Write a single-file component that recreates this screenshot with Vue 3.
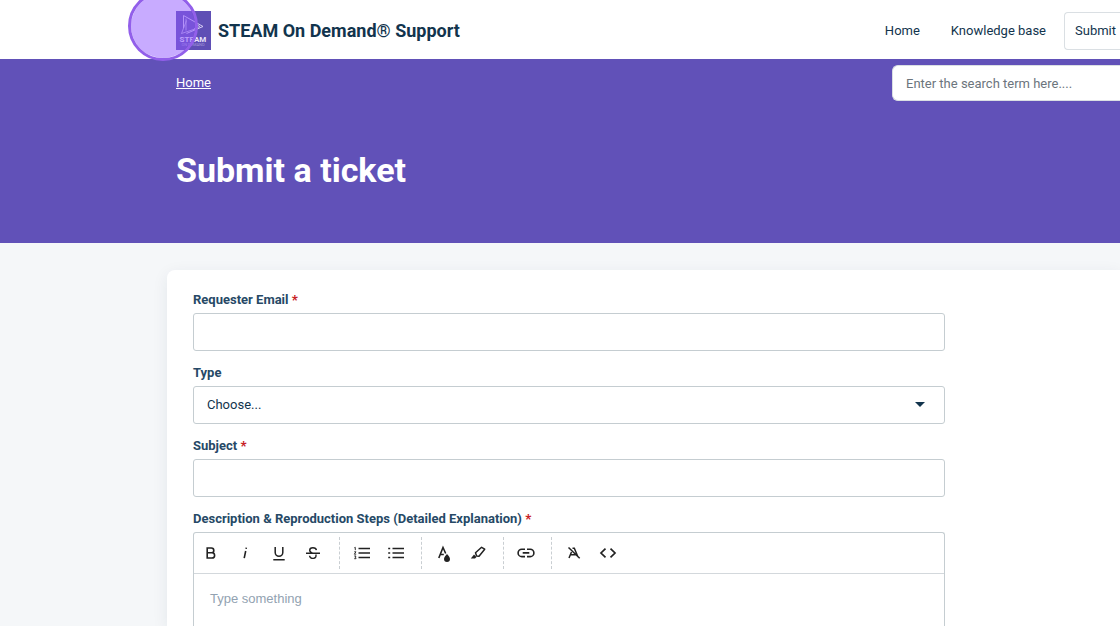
<script setup>
import { ref } from 'vue'

const email = ref('')
const type = ref('')
const subject = ref('')
const description = ref('')
const search = ref('')
</script>

<template>
  <div class="page">
    <header class="topbar">
      <a class="brand" href="#">
        <svg class="logo" viewBox="0 0 35 39" aria-hidden="true">
          <rect width="35" height="39" fill="#5f4fb5" />
          <g fill="none" stroke="#d6cdf3" stroke-width="1" stroke-linejoin="round">
            <path d="M7.500 17V4.500L27 15.500L10.500 22.500" />
            <path d="M10.500 9.500L5.500 22.500L19 18M10 7.500V19.500M19.500 13L24 15.500L18 18" stroke-opacity=".75" />
          </g>
          <text x="17" y="31" class="logo-name">STEAM</text>
          <text x="17" y="35" class="logo-sub">ON DEMAND</text>
        </svg>
        <span class="brand-name">STEAM On Demand® Support</span>
      </a>
      <nav class="nav">
        <a href="#">Home</a>
        <a href="#">Knowledge base</a>
        <button type="button" class="submit">Submit</button>
      </nav>
      <span class="halo"></span>
    </header>

    <section class="hero">
      <div class="hero-row">
        <a class="crumb" href="#">Home</a>
        <input v-model="search" class="search" type="search" aria-label="Search" placeholder="Enter the search term here...." />
      </div>
      <h1>Submit a ticket</h1>
    </section>

    <main class="card">
      <form class="form" @submit.prevent>
        <div class="field">
          <label for="email">Requester Email <b>*</b></label>
          <input id="email" v-model="email" class="control" type="email" />
        </div>
        <div class="field">
          <label for="type">Type</label>
          <div class="select-wrap">
            <select id="type" v-model="type" class="control">
              <option value="">Choose...</option>
            </select>
            <svg class="caret" viewBox="0 0 10 5" aria-hidden="true"><path d="M0 0H10L5 5Z" fill="#12344d" /></svg>
          </div>
        </div>
        <div class="field">
          <label for="subject">Subject <b>*</b></label>
          <input id="subject" v-model="subject" class="control" type="text" />
        </div>
        <div class="field last">
          <label for="description">Description &amp; Reproduction Steps (Detailed Explanation) <b>*</b></label>
          <div class="editor">
            <div class="toolbar">
              <div class="group">
                <button type="button" aria-label="Bold">
                  <svg viewBox="0 0 18 18"><path d="M5.200 4H9.400A2.400 2.400 0 0 1 9.400 8.800H5.200ZM5.200 8.800H10A2.600 2.600 0 0 1 10 14H5.200Z" stroke-width="1.600" /></svg>
                </button>
                <button type="button" aria-label="Italic">
                  <svg viewBox="0 0 18 18"><path d="M9.700 7L8.200 14.200M10.300 3.600L10.100 4.900" stroke-width="1.600" /></svg>
                </button>
                <button type="button" aria-label="Underline">
                  <svg viewBox="0 0 18 18"><path d="M5.200 3V8.500A3.800 3.800 0 0 0 12.800 8.500V3M3.300 15.800H14.700" stroke-width="1.500" /></svg>
                </button>
                <button type="button" aria-label="Strikethrough">
                  <svg viewBox="0 0 18 18"><path d="M2 9.300H16M12.400 6.200C12 2.800 5.700 2.900 5.700 6.200C5.700 7.600 6.800 8.500 9 9.300M11.800 10.500C13.600 15.200 5.600 15.600 5.600 11.800" stroke-width="1.400" /></svg>
                </button>
              </div>
              <div class="group">
                <button type="button" aria-label="Ordered list">
                  <svg viewBox="0 0 18 18"><path d="M5.500 4.500H17M5.500 9H17M5.500 13.500H17" stroke-width="1.600" /><path d="M1.300 3.800L2.300 3.300V6.200M1.200 7.800H3L1.300 10.200H3.200M1.200 12H3L2.200 13.300L3 13.800V14.700H1.200" stroke-width=".9" /></svg>
                </button>
                <button type="button" aria-label="Bulleted list">
                  <svg viewBox="0 0 18 18"><path d="M5.500 4.500H17M5.500 9H17M5.500 13.500H17M1.200 4.500H3.200M1.200 9H3.200M1.200 13.500H3.200" stroke-width="1.700" /></svg>
                </button>
              </div>
              <div class="group">
                <button type="button" aria-label="Text colour">
                  <svg viewBox="0 0 18 18"><path d="M3.800 14L8 3.500L10.700 9.500M5.200 10.500H8.800" stroke-width="1.600" /><path d="M12 10C10.500 12 9 13.200 9 15A3 3 0 0 0 15 15C15 13.200 13.500 12 12 10Z" fill="#222" stroke="none" /></svg>
                </button>
                <button type="button" aria-label="Highlight">
                  <svg viewBox="0 0 18 18"><path d="M6.500 8.800L12.600 3.300L15.700 5.200L10 12.200L7.600 11.900Z" stroke-width="1.500" stroke-linejoin="round" /><path d="M5 10.500L7.500 13L6 14.500H1.800Z" fill="#222" stroke="none" /></svg>
                </button>
              </div>
              <div class="group">
                <button type="button" aria-label="Insert link">
                  <svg viewBox="0 0 18 18"><path d="M8 5.200H4.800A3.700 3.700 0 0 0 4.800 12.600H8M10 5.200H13.200A3.700 3.700 0 0 1 13.200 12.600H10M5.700 8.900H12.300" stroke-width="1.600" /></svg>
                </button>
              </div>
              <div class="group">
                <button type="button" aria-label="Clear formatting">
                  <svg viewBox="0 0 18 18"><path d="M4 14L6.500 8M7.500 4.200H9.300L13 13M5.800 10.700H11.200M3.500 3.500L14.700 14.300" stroke-width="1.500" /></svg>
                </button>
                <button type="button" aria-label="Code view">
                  <svg viewBox="0 0 18 18"><path d="M6.500 4.700L2 9L6.500 13.300M11.500 4.700L16 9L11.500 13.300" stroke-width="1.700" /></svg>
                </button>
              </div>
            </div>
            <textarea id="description" v-model="description" placeholder="Type something"></textarea>
          </div>
        </div>
      </form>
    </main>
  </div>
</template>

<style>
body {
  margin: 0;
}
</style>

<style scoped>
.page {
  display: flex;
  flex-direction: column;
  height: 100vh;
  overflow: hidden;
  background: #f5f7f9;
  color: #12344d;
  font: 13px/20px Roboto, "Liberation Sans", sans-serif;
}
.page * {
  box-sizing: border-box;
}
a {
  color: inherit;
  text-decoration: none;
}
button,
input,
select,
textarea {
  font: inherit;
  color: inherit;
}
.topbar {
  position: relative;
  display: flex;
  flex: none;
  align-items: center;
  justify-content: space-between;
  height: 59px;
  padding: 2px 0 0 176px;
  background: #fff;
}
.brand {
  display: flex;
  align-items: center;
  gap: 7px;
}
.logo {
  width: 35px;
  height: 39px;
}
.logo-name,
.logo-sub {
  fill: #e8e2fa;
  text-anchor: middle;
  font-family: Roboto, sans-serif;
}
.logo-name {
  font-size: 8px;
  font-weight: 700;
}
.logo-sub {
  font-size: 4px;
  fill: #a79bdc;
}
.brand-name {
  font-size: 18px;
  font-weight: 700;
  line-height: 24px;
}
.nav {
  display: flex;
  align-items: center;
}
.nav a {
  margin-right: 31px;
}
.nav a + a {
  margin-right: 18px;
}
.submit {
  height: 38px;
  padding: 0 4px 0 10px;
  background: #fff;
  border: 1px solid #dadfe3;
  border-right: 0;
  border-radius: 4px 0 0 4px;
}
.halo {
  position: absolute;
  top: -9px;
  left: 128px;
  width: 70px;
  height: 70px;
  border: 3px solid #925fea;
  border-radius: 50%;
  background: rgba(145, 87, 255, .5);
  background-clip: padding-box;
}
.hero {
  flex: none;
  height: 184px;
  padding: 6px 0 0 176px;
  background: #6151b8;
  color: #fff;
}
.hero-row {
  display: flex;
  align-items: center;
  justify-content: space-between;
}
.crumb {
  text-decoration: underline;
}
.search {
  width: 228px;
  height: 36px;
  padding: 0 13px;
  border: 1px solid #dadfe3;
  border-right: 0;
  border-radius: 6px 0 0 6px;
  background: #fff;
  color: #12344d;
  appearance: none;
}
.search::placeholder {
  color: #6c757d;
  opacity: 1;
}
h1 {
  margin: 47px 0 0;
  font-size: 34px;
  font-weight: 700;
  line-height: 44px;
}
.card {
  display: flex;
  flex: 1;
  min-height: 0;
  margin: 27px 0 0 167px;
  padding: 20px 26px 0;
  background: #fff;
  border-radius: 8px 0 0 0;
  box-shadow: 0 4px 16px rgba(18, 52, 77, .08);
}
.form {
  display: flex;
  flex: 1;
  flex-direction: column;
  max-width: 752px;
}
.field {
  flex: none;
  margin-bottom: 12px;
}
.field.last {
  display: flex;
  flex: 1;
  flex-direction: column;
  min-height: 0;
  margin-bottom: 0;
}
label {
  display: block;
  margin-bottom: 3px;
  font-weight: 700;
  color: #264966;
}
label b {
  color: #c82124;
}
.control {
  display: block;
  width: 100%;
  height: 38px;
  padding: 0 13px;
  border: 1px solid #c5cdd1;
  border-radius: 3px;
  background: #fff;
  appearance: none;
}
.select-wrap {
  position: relative;
}
.caret {
  position: absolute;
  top: 16px;
  right: 20px;
  width: 10px;
  height: 5px;
}
.editor {
  display: flex;
  flex: 1;
  flex-direction: column;
  min-height: 0;
  border: 1px solid #c5cdd1;
  border-bottom: 0;
  border-radius: 3px 3px 0 0;
}
.toolbar {
  display: flex;
  flex: none;
  height: 41px;
  padding: 4px 0;
  border-bottom: 1px solid #d3d8dc;
}
.group {
  display: flex;
  align-items: center;
  gap: 16px;
  padding: 0 16px 0 13px;
}
.group:first-child {
  padding: 0 17px 0 8px;
}
.group + .group {
  border-left: 1px dashed #c9ced2;
}
.toolbar button {
  display: block;
  width: 18px;
  height: 18px;
  padding: 0;
  border: 0;
  background: none;
}
.toolbar svg {
  display: block;
  width: 18px;
  height: 18px;
  fill: none;
  stroke: #222;
}
textarea {
  display: block;
  flex: 1;
  width: 100%;
  min-height: 0;
  padding: 15px 16px 0;
  border: 0;
  background: none;
  resize: none;
  font-family: "Liberation Sans", sans-serif;
}
textarea::placeholder {
  color: #92a2b1;
  opacity: 1;
}
</style>
